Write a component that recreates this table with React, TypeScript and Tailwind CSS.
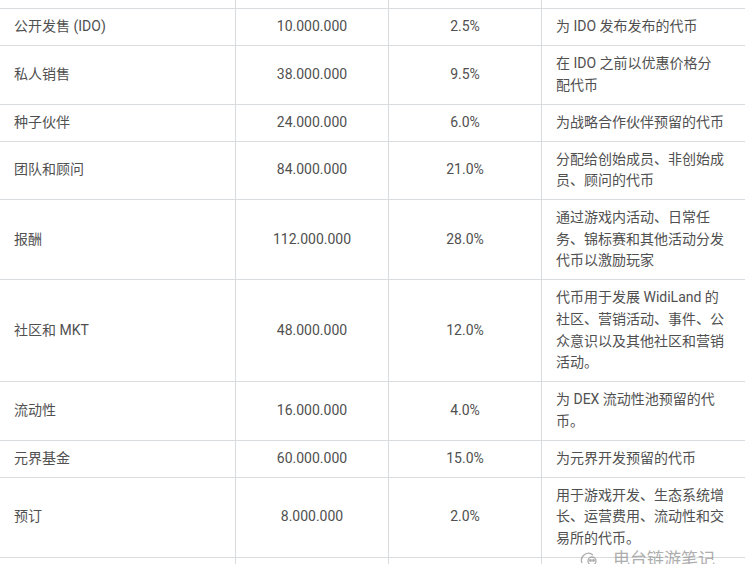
const rows = [
  { name: '公开发售 (IDO)', amount: '10.000.000', pct: '2.5%', desc: ['为 IDO 发布发布的代币'] },
  { name: '私人销售', amount: '38.000.000', pct: '9.5%', desc: ['在 IDO 之前以优惠价格分', '配代币'] },
  { name: '种子伙伴', amount: '24.000.000', pct: '6.0%', desc: ['为战略合作伙伴预留的代币'] },
  {
    name: '团队和顾问',
    amount: '84.000.000',
    pct: '21.0%',
    desc: ['分配给创始成员、非创始成', '员、顾问的代币'],
  },
  {
    name: '报酬',
    amount: '112.000.000',
    pct: '28.0%',
    desc: ['通过游戏内活动、日常任', '务、锦标赛和其他活动分发', '代币以激励玩家'],
  },
  {
    name: '社区和 MKT',
    amount: '48.000.000',
    pct: '12.0%',
    desc: ['代币用于发展 WidiLand 的', '社区、营销活动、事件、公', '众意识以及其他社区和营销', '活动。'],
  },
  { name: '流动性', amount: '16.000.000', pct: '4.0%', desc: ['为 DEX 流动性池预留的代', '币。'] },
  { name: '元界基金', amount: '60.000.000', pct: '15.0%', desc: ['为元界开发预留的代币'] },
  {
    name: '预订',
    amount: '8.000.000',
    pct: '2.0%',
    desc: ['用于游戏开发、生态系统增', '长、运营费用、流动性和交', '易所的代币。'],
  },
];

const rowCls = 'grid grid-cols-[235px_153px_153px_1fr] border-b border-[#d8dcdf]';
const cell = 'flex items-center py-[7.2px] leading-[21.6px]';

export default function App() {
  return (
    <div
      className="relative w-[745px] h-[564px] overflow-hidden bg-white text-[14px] text-[#505050]"
      style={{ fontFamily: 'Roboto, "Noto Sans CJK SC", sans-serif' }}
    >
      {/* cut-off row above */}
      <div className={rowCls + ' h-[9px]'}>
        <div />
        <div className="border-l border-[#d8dcdf]" />
        <div className="border-l border-[#d8dcdf]" />
        <div className="border-l border-[#d8dcdf]" />
      </div>

      {rows.map((r) => (
        <div key={r.name} className={rowCls}>
          <div className={cell + ' px-[14px]'}>{r.name}</div>
          <div className={cell + ' justify-center border-l border-[#d8dcdf]'}>{r.amount}</div>
          <div className={cell + ' justify-center border-l border-[#d8dcdf]'}>{r.pct}</div>
          <div className={cell + ' flex-col items-start justify-center border-l border-[#d8dcdf] px-[14px] whitespace-nowrap'}>
            {r.desc.map((line) => (
              <span key={line}>{line}</span>
            ))}
          </div>
        </div>
      ))}

      {/* cut-off row below */}
      <div className={rowCls + ' h-[40px]'}>
        <div />
        <div className="border-l border-[#d8dcdf]" />
        <div className="border-l border-[#d8dcdf]" />
        <div className="border-l border-[#d8dcdf]" />
      </div>

      {/* watermark */}
      <div className="absolute left-[580px] top-[551px] flex items-start gap-[12px] text-[#9a9a9a] opacity-80">
        <svg width="21" height="16" viewBox="0 0 21 16" fill="none" stroke="currentColor" strokeWidth="1.3">
          <path d="M2 12 A7 7 0 0 1 13 4" />
          <circle cx="12" cy="10" r="4" />
          <circle cx="10.5" cy="9.5" r="0.8" fill="currentColor" />
          <circle cx="13.5" cy="9.5" r="0.8" fill="currentColor" />
        </svg>
        <span className="text-[17px] leading-none">电台链游笔记</span>
      </div>
    </div>
  );
}
